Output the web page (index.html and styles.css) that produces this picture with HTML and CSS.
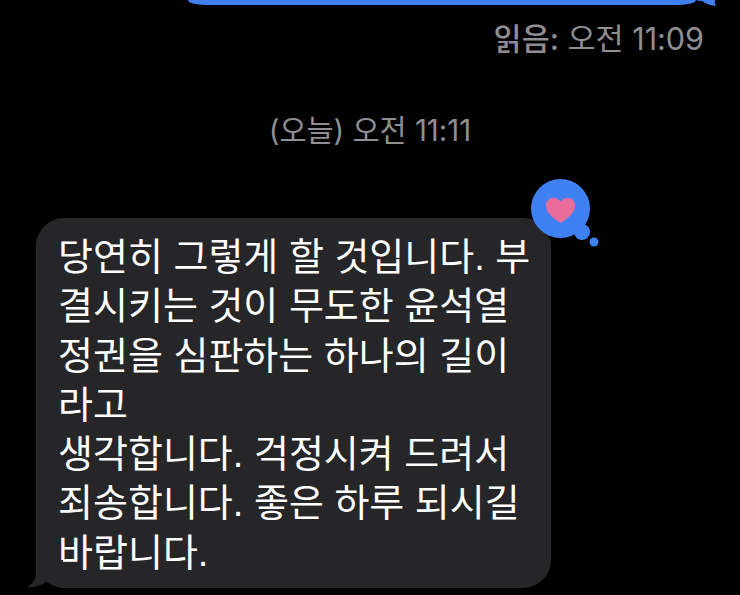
FILE: index.html
```html
<!DOCTYPE html>
<html lang="ko">
<head>
  <meta charset="UTF-8" />
  <title>메시지</title>
  <link rel="stylesheet" href="styles.css">
</head>
<body>
  <div class="sent-row">
    <div class="sent-bubble"></div>
    <svg class="sent-tail" width="24" height="6" viewBox="0 0 24 6">
      <path d="M0 0 H20 Q19 3 21 6 Q12 5 7 1 Q4 1 0 0 Z" fill="#3f80f3"/>
    </svg>
  </div>
  <div class="read-status"><span class="read-label">읽음:</span> 오전 11:09</div>
  <div class="timestamp">(오늘) 오전 11:11</div>

  <div class="message">
    <div class="bubble">당연히 그렇게 할 것입니다. 부<br>결시키는 것이 무도한 윤석열<br>정권을 심판하는 하나의 길이<br>라고<br>생각합니다. 걱정시켜 드려서<br>죄송합니다. 좋은 하루 되시길<br>바랍니다.</div>
    <svg class="tail" width="36" height="28" viewBox="0 0 36 28">
      <path d="M9 0 V14 Q9 22 0 27 Q12 28 20 21 Q28 27 36 28 V0 Z" fill="#262628"/>
    </svg>
    <svg class="tapback" width="72" height="74" viewBox="0 0 72 74">
      <circle cx="30.5" cy="30.5" r="29.5" fill="#3f80f3"/>
      <circle cx="52" cy="54" r="8" fill="#3f80f3"/>
      <circle cx="64" cy="64" r="4.5" fill="#3f80f3"/>
      <path d="M30.5 45 C23 40 16 35 16 27.5 C16 19 26 17 30.5 23.5 C35 17 45 19 45 27.5 C45 35 38 40 30.5 45 Z" fill="#ea6c9b"/>
    </svg>
  </div>
</body>
</html>
```

FILE: styles.css
```css
html, body {
  margin: 0;
  height: 595px;
  overflow: hidden;
  background: #000;
}
body {
  font-family: "Inter", "Noto Sans CJK KR", sans-serif;
  color: #8e8e93;
}
.sent-row {
  display: flex;
  height: 5px;
  margin-left: 188px;
}
.sent-bubble {
  width: 508px;
  background: #3f80f3;
  border-radius: 0 0 18px 18px / 0 0 5px 5px;
}
.sent-tail {
  margin-left: -1px;
}
.read-status {
  margin-top: 16px;
  padding-right: 36px;
  font-size: 30.5px;
  line-height: 36px;
  text-align: right;
}
.read-label {
  font-weight: 500;
}
.timestamp {
  margin-top: 56px;
  font-size: 29.4px;
  line-height: 36px;
  text-align: center;
}
.message {
  position: relative;
  margin-top: 69px;
  margin-left: 36px;
  width: 515px;
}
.bubble {
  background: #262628;
  color: #fff;
  border-radius: 28px;
  padding: 15px 10px 0 22px;
  height: 370px;
  box-sizing: border-box;
  font-family: "Liberation Sans", "Noto Sans CJK KR", sans-serif;
  font-size: 38px;
  line-height: 49.3px;
  white-space: nowrap;
}
.tail {
  position: absolute;
  left: -9px;
  bottom: 0;
}
.tapback {
  position: absolute;
  left: 494px;
  top: -40px;
}
```
